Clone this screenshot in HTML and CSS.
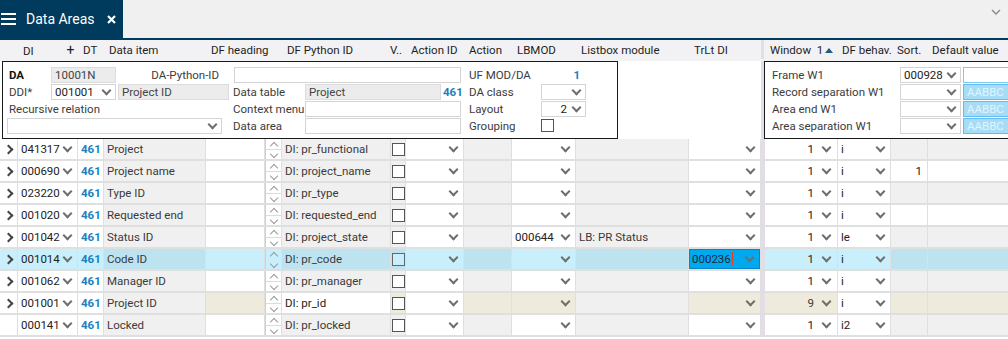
FILE: index.html
```html
<!DOCTYPE html>
<html lang="en">
<head>
  <meta charset="UTF-8" />
  <title>Data Areas</title>
  <link rel="stylesheet" href="styles.css">
</head>
<body>
  <div class="topbar">
    <div class="tab">
      <svg class="burger" width="15" height="14" viewBox="0 0 15 14"><path d="M0 2h15M0 7h15M0 12h15" stroke="#fff" stroke-width="2"/></svg>
      <span class="tab-title">Data Areas</span>
      <svg class="close" width="9" height="9" viewBox="0 0 9 9"><path d="M1 1L8 8M8 1L1 8" stroke="#fff" stroke-width="2.2"/></svg>
    </div>
    <svg class="more" width="10" height="6" viewBox="0 0 10 6"><path d="M1 1L5 5L9 1" stroke="#8a8a8a" stroke-width="1.4" fill="none"/></svg>
  </div>

  <div class="colhead">
    <div></div>
    <div class="h-di">DI <span class="plus">+</span></div>
    <div>DT</div>
    <div>Data item</div>
    <div>DF heading</div>
    <div></div>
    <div>DF Python ID</div>
    <div class="h-vi">V..</div>
    <div>Action ID</div>
    <div>Action</div>
    <div>LBMOD</div>
    <div>Listbox module</div>
    <div>TrLt DI</div>
    <div class="sep"></div>
    <div>Window &nbsp;1<span class="sort-up"></span></div>
    <div class="h-behav">DF behav.</div>
    <div class="h-sort">Sort.</div>
    <div class="h-def">Default value</div>
  </div>

  <div class="band">
    <div class="lbox">
      <div class="lab bold c1">DA</div>
      <div class="inp ro c2">10001N</div>
      <div class="lab right c34">DA-Python-ID</div>
      <div class="inp wide c57"></div>
      <div class="lab c8">UF MOD/DA</div>
      <div class="num c9">1</div>

      <div class="lab c1">DDI*</div>
      <div class="inp dd c2">001001</div>
      <div class="inp ro c4">Project ID</div>
      <div class="lab c5">Data table</div>
      <div class="inp ro c6">Project</div>
      <div class="blue c7">461</div>
      <div class="lab c8">DA class</div>
      <div class="inp dd c9"></div>

      <div class="lab c14">Recursive relation</div>
      <div class="lab c5">Context menu</div>
      <div class="inp c67"></div>
      <div class="lab c8">Layout</div>
      <div class="inp dd c9 val-r">2</div>

      <div class="inp dd c14 rec"></div>
      <div class="lab c5">Data area</div>
      <div class="inp c67"></div>
      <div class="lab c8">Grouping</div>
      <div class="c9"><span class="cb"></span></div>
    </div>
    <div class="gapcol"></div>
    <div class="sep"></div>
    <div class="rbox">
      <div class="lab">Frame W1</div>
      <div class="inp dd">000928</div>
      <div class="inp frame"></div>

      <div class="lab">Record separation W1</div>
      <div class="inp dd"></div>
      <div class="inp color">AABBC</div>

      <div class="lab">Area end W1</div>
      <div class="inp dd"></div>
      <div class="inp color">AABBC</div>

      <div class="lab">Area separation W1</div>
      <div class="inp dd"></div>
      <div class="inp color">AABBC</div>
    </div>
  </div>

  <div class="grid">
    <div class="row">
      <div class="c w arr"></div><div class="c w dd">041317</div><div class="c w dt">461</div><div class="c g">Project</div><div class="c w"></div><div class="c w spin"></div><div class="c g">DI: pr_functional</div><div class="c g vi"><span class="cb"></span></div><div class="c w dd"></div><div class="c g"></div><div class="c w dd"></div><div class="c g"></div><div class="c w dd"></div><div class="c sep"></div><div class="c w dd win">1</div><div class="c w dd">i</div><div class="c g"></div><div class="c g"></div>
    </div>
    <div class="row">
      <div class="c w arr"></div><div class="c w dd">000690</div><div class="c w dt">461</div><div class="c g">Project name</div><div class="c w"></div><div class="c w spin"></div><div class="c g">DI: project_name</div><div class="c g vi"><span class="cb"></span></div><div class="c w dd"></div><div class="c g"></div><div class="c w dd"></div><div class="c g"></div><div class="c w dd"></div><div class="c sep"></div><div class="c w dd win">1</div><div class="c w dd">i</div><div class="c w num-r">1</div><div class="c w"></div>
    </div>
    <div class="row">
      <div class="c w arr"></div><div class="c w dd">023220</div><div class="c w dt">461</div><div class="c g">Type ID</div><div class="c w"></div><div class="c w spin"></div><div class="c g">DI: pr_type</div><div class="c g vi"><span class="cb"></span></div><div class="c w dd"></div><div class="c g"></div><div class="c w dd"></div><div class="c g"></div><div class="c w dd"></div><div class="c sep"></div><div class="c w dd win">1</div><div class="c w dd">i</div><div class="c g"></div><div class="c g"></div>
    </div>
    <div class="row">
      <div class="c w arr"></div><div class="c w dd">001020</div><div class="c w dt">461</div><div class="c g">Requested end</div><div class="c w"></div><div class="c w spin"></div><div class="c g">DI: requested_end</div><div class="c g vi"><span class="cb"></span></div><div class="c w dd"></div><div class="c g"></div><div class="c w dd"></div><div class="c g"></div><div class="c w dd"></div><div class="c sep"></div><div class="c w dd win">1</div><div class="c w dd">i</div><div class="c w"></div><div class="c w"></div>
    </div>
    <div class="row">
      <div class="c w arr"></div><div class="c w dd">001042</div><div class="c w dt">461</div><div class="c g">Status ID</div><div class="c w"></div><div class="c w spin"></div><div class="c g">DI: project_state</div><div class="c g vi"><span class="cb"></span></div><div class="c w dd"></div><div class="c g"></div><div class="c w dd">000644</div><div class="c g">LB: PR Status</div><div class="c w dd"></div><div class="c sep"></div><div class="c w dd win">1</div><div class="c w dd">le</div><div class="c g"></div><div class="c g"></div>
    </div>
    <div class="row sel">
      <div class="c w arr"></div><div class="c w dd">001014</div><div class="c w dt">461</div><div class="c g">Code ID</div><div class="c w"></div><div class="c w spin"></div><div class="c g">DI: pr_code</div><div class="c g vi"><span class="cb"></span></div><div class="c w dd"></div><div class="c g"></div><div class="c w dd"></div><div class="c g"></div><div class="c active dd"><span>000236<i class="caret"></i></span></div><div class="c sep"></div><div class="c w dd win">1</div><div class="c w dd">i</div><div class="c g"></div><div class="c g"></div>
    </div>
    <div class="row">
      <div class="c w arr"></div><div class="c w dd">001062</div><div class="c w dt">461</div><div class="c g">Manager ID</div><div class="c w"></div><div class="c w spin"></div><div class="c g">DI: pr_manager</div><div class="c g vi"><span class="cb"></span></div><div class="c w dd"></div><div class="c g"></div><div class="c w dd"></div><div class="c g"></div><div class="c w dd"></div><div class="c sep"></div><div class="c w dd win">1</div><div class="c w dd">i</div><div class="c g"></div><div class="c g"></div>
    </div>
    <div class="row">
      <div class="c w arr"></div><div class="c w dd">001001</div><div class="c w dt">461</div><div class="c g">Project ID</div><div class="c b"></div><div class="c w spin"></div><div class="c w">DI: pr_id</div><div class="c b vi"><span class="cb"></span></div><div class="c w dd"></div><div class="c b"></div><div class="c b dd"></div><div class="c g"></div><div class="c b dd"></div><div class="c sep"></div><div class="c b dd win">9</div><div class="c w dd">i</div><div class="c b"></div><div class="c b"></div>
    </div>
    <div class="row">
      <div class="c w"></div><div class="c w dd">000141</div><div class="c w dt">461</div><div class="c g">Locked</div><div class="c w"></div><div class="c w spin"></div><div class="c g">DI: pr_locked</div><div class="c g vi"><span class="cb"></span></div><div class="c w dd"></div><div class="c g"></div><div class="c w dd"></div><div class="c g"></div><div class="c w dd"></div><div class="c sep"></div><div class="c w dd win">1</div><div class="c w dd">i2</div><div class="c g"></div><div class="c g"></div>
    </div>
  </div>
</body>
</html>
```

FILE: styles.css
```css
* {
  box-sizing: border-box;
}

body {
  margin: 0;
  width: 1008px;
  height: 339px;
  overflow: hidden;
  font-family: Roboto, "Liberation Sans", sans-serif;
  font-size: 11.5px;
  color: #333;
  background: #fff;
}

/* top tab bar */
.topbar {
  height: 40px;
  display: flex;
  justify-content: space-between;
  align-items: flex-start;
  background: #f0f0f0;
  border-bottom: 2px solid #003a5c;
}

.tab {
  width: 123px;
  height: 38px;
  display: flex;
  align-items: center;
  padding-left: 1px;
  background: #003a5c;
  color: #fff;
}

.tab-title {
  margin-left: 10px;
  font-size: 14px;
}

.close {
  margin-left: 13px;
}

.more {
  margin: 9px 7px 0 0;
}

/* shared column template */
.colhead,
.grid {
  display: grid;
  grid-template-columns: 17px 59px 25px 101px 58px 16px 108px 14px 57px 47px 63px 112px 71px 3px 72px 52px 36px 80px;
  column-gap: 1px;
}

.colhead {
  height: 19px;
  align-items: center;
  background: #f2f2f4;
  color: #1e1e1e;
}

.colhead > div {
  padding-left: 5px;
  white-space: nowrap;
}

.colhead .sep {
  align-self: stretch;
  padding: 0;
}

.colhead .h-vi {
  padding-left: 0;
  margin-left: -1px;
}

.colhead .h-behav {
  padding-left: 4px;
}

.colhead .h-sort {
  padding-left: 6px;
}

.colhead .h-def {
  padding-left: 4px;
}

.plus {
  margin-left: 30px;
  font-size: 14px;
}

.sort-up {
  display: inline-block;
  margin-left: 2px;
  border-left: 4px solid transparent;
  border-right: 4px solid transparent;
  border-bottom: 5px solid #245a80;
  vertical-align: 1px;
}

.sep {
  background: #e2dde8;
}

/* DA detail band */
.band {
  height: 80px;
  display: flex;
  border-top: 2px solid #f2f2f4;
}

.lbox {
  flex: none;
  margin-left: 2px;
  width: 616px;
  height: 78px;
  padding-top: 5px;
  border: 1px solid #1a1a1a;
  display: grid;
  grid-template-columns: 48px 65px 2px 111px 76px 136px 22px 78px 45px 1fr;
  grid-template-rows: repeat(4, 17px);
}

.gapcol {
  flex: none;
  width: 143px;
}

.band > .sep {
  flex: none;
  width: 3px;
}

.rbox {
  flex: 1;
  min-width: 0;
  height: 78px;
  padding-top: 5px;
  border: 1px solid #1a1a1a;
  border-right: none;
  display: grid;
  grid-template-columns: 133px 61px 1fr;
  column-gap: 2px;
  grid-template-rows: repeat(4, 17px);
  overflow: hidden;
}

.lab {
  padding-left: 6px;
  line-height: 16px;
  white-space: nowrap;
  color: #3c3c3c;
}

.rbox .lab {
  padding-left: 7px;
}

.lab.bold {
  font-weight: bold;
  color: #111;
}

.lab.right {
  justify-self: end;
  padding-right: 10px;
}

.inp {
  height: 16px;
  padding: 0 3px;
  line-height: 14px;
  border: 1px solid #d4d4d4;
  background: #fff;
  color: #222;
  white-space: nowrap;
}

.inp.ro {
  background: #ececec;
  border-color: #dcdcdc;
  color: #444;
}

.inp.frame {
  border-color: #7ccaf2;
  border-right: none;
}

.inp.color {
  background: #a6dcf6;
  border-color: #63bdf0;
  border-right: none;
  color: #e2f4fd;
}

.c1 { grid-column: 1; }
.c2 { grid-column: 2; }
.c4 { grid-column: 4; }
.c5 { grid-column: 5; padding-left: 4px; }
.c6 { grid-column: 6; }
.c7 { grid-column: 7; }
.c8 { grid-column: 8; }
.c9 { grid-column: 9; }
.c34 { grid-column: 3 / 5; }
.c14 { grid-column: 1 / 5; }
.c57 { grid-column: 5 / 8; margin: 0 2px 0 5px; }
.c67 { grid-column: 6 / 8; margin-right: 2px; }

.rec {
  margin: 0 7px 0 4px;
}

.num {
  text-align: right;
  padding-right: 6px;
  line-height: 16px;
  font-weight: bold;
  color: #1a7fc1;
}

.blue {
  padding-left: 2px;
  line-height: 16px;
  font-weight: bold;
  color: #1a7fc1;
}

/* dropdown chevron */
.dd {
  display: flex;
  align-items: center;
}

.dd::after {
  content: "";
  flex: none;
  width: 5px;
  height: 5px;
  margin: -4px 3px 0 auto;
  border-right: 2px solid #6e6e6e;
  border-bottom: 2px solid #6e6e6e;
  transform: rotate(45deg);
}

.inp.dd::after {
  margin-right: 2px;
}

.val-r {
  justify-content: flex-end;
}

.val-r::after {
  margin-left: 6px;
}

.cb {
  display: inline-block;
  width: 13px;
  height: 13px;
  margin-top: 1px;
  border: 1px solid #555;
  background: #fff;
}

/* rows */
.grid {
  grid-auto-rows: 20px;
  row-gap: 2px;
  padding-bottom: 2px;
  background: #dfdfdf;
}

.row {
  display: contents;
}

.c {
  padding: 0 3px;
  line-height: 20px;
  white-space: nowrap;
  overflow: hidden;
  color: #3a3a3a;
}

.w { background: #fff; color: #222; }
.g { background: #f0f0f0; }
.b { background: #efebdc; }

.row.sel > .w { background: #c9effc; }
.row.sel > .g { background: #bde3f1; }
.row.sel .cb { background: #c9effc; border-color: #5a6a72; }

.c.dt {
  font-weight: bold;
  color: #1a7fc1;
}

.c.arr {
  position: relative;
}

.c.arr::before {
  content: "";
  position: absolute;
  left: 5px;
  top: 7px;
  width: 5px;
  height: 5px;
  border-right: 2px solid #444;
  border-top: 2px solid #444;
  transform: rotate(45deg);
}

.c.spin {
  padding: 0;
  border-left: 1px solid #d0d0d0;
  background:
    linear-gradient(#dcdcdc, #dcdcdc) 0 10px / 100% 1px no-repeat,
    #fff;
  position: relative;
}

.c.spin::before,
.c.spin::after {
  content: "";
  position: absolute;
  left: 5px;
  width: 5px;
  height: 5px;
  border-left: 1px solid #9a9a9a;
  border-top: 1px solid #9a9a9a;
}

.c.spin::before {
  top: 4px;
  transform: rotate(45deg);
}

.c.spin::after {
  top: 12px;
  transform: rotate(225deg);
}

.c.vi {
  padding: 0 0 0 1px;
  display: flex;
  align-items: center;
}

.c.vi .cb {
  margin-top: 0;
}

.c.win {
  justify-content: flex-end;
}

.c.win::after {
  margin-left: 9px;
  margin-right: 4px;
}

.c.num-r {
  text-align: right;
  padding-right: 5px;
}

.c.active {
  background: #00a8ef;
  border: 1px solid #0a84c6;
  padding-left: 2px;
  color: #1b2a33;
}

.caret {
  display: inline-block;
  width: 1px;
  height: 13px;
  margin-left: 1px;
  vertical-align: -2px;
  background: #e0401a;
}
```
